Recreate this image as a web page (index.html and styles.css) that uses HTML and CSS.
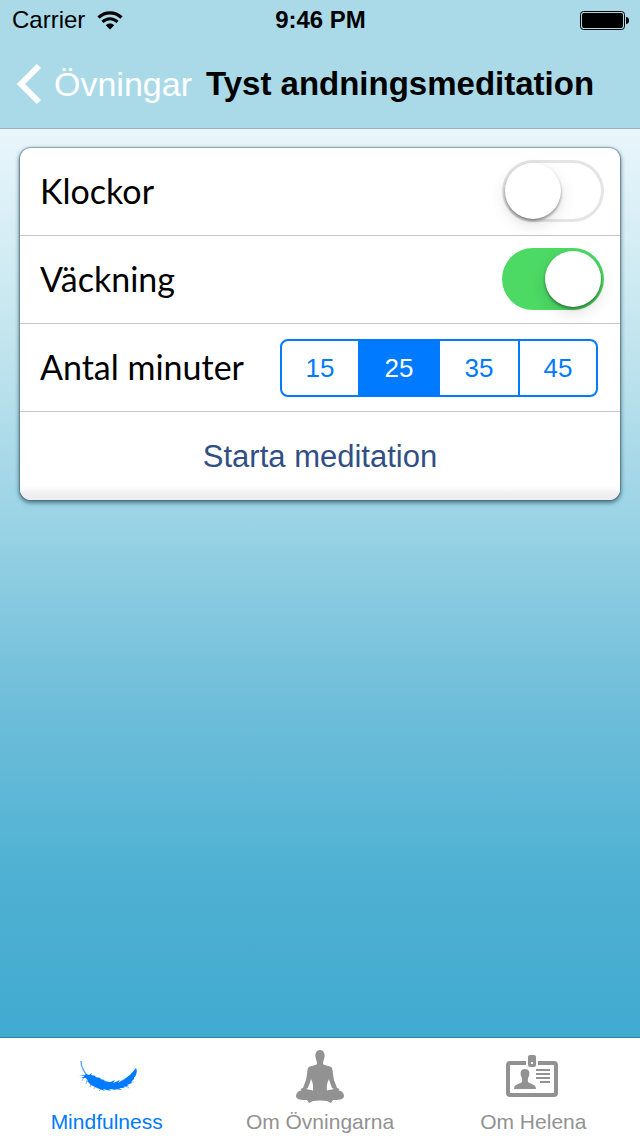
FILE: index.html
```html
<!DOCTYPE html>
<html lang="sv">
<head>
<meta charset="utf-8">
<meta name="viewport" content="width=device-width, initial-scale=1">
<title>Tyst andningsmeditation</title>
<link rel="stylesheet" href="styles.css">
</head>
<body>
<div class="app">
  <header class="top">
    <div class="status">
      <div class="status-left">
        <span>Carrier</span>
        <svg class="wifi" width="26" height="19" viewBox="0 0 26 19" aria-hidden="true">
          <path d="M1.500 6.500C8 .2 18 .2 24.500 6.500" fill="none" stroke="#000" stroke-width="3.200"/>
          <path d="M5.500 10.900C10 6.600 16 6.600 20.500 10.900" fill="none" stroke="#000" stroke-width="3"/>
          <path d="M8.800 14.200C11 11.800 15 11.800 17.200 14.200L13 18.500Z"/>
        </svg>
      </div>
      <span class="clock">9:46 PM</span>
      <svg class="battery" width="49" height="19" viewBox="0 0 49 19" aria-hidden="true">
        <rect x=".5" y=".5" width="44" height="18" rx="3" fill="none" stroke="#000"/>
        <rect x="2" y="2" width="41" height="15" rx="2"/>
        <path d="M46 6c2 0 3 1.500 3 3.500s-1 3.500-3 3.500z"/>
      </svg>
    </div>
    <nav class="navbar">
      <button class="back" type="button">
        <svg width="26" height="42" viewBox="0 0 26 42" aria-hidden="true">
          <path d="M23 3L5 21L23 39" fill="none" stroke="#fff" stroke-width="6"/>
        </svg>
        <span>Övningar</span>
      </button>
      <h1 class="title">Tyst andningsmeditation</h1>
    </nav>
  </header>

  <main class="content">
    <form class="card">
      <div class="row">
        <label class="label" for="bells">Klockor</label>
        <input class="switch" id="bells" type="checkbox">
      </div>
      <div class="row">
        <label class="label" for="alarm">Väckning</label>
        <input class="switch" id="alarm" type="checkbox" checked>
      </div>
      <div class="row">
        <span class="label" id="minutes">Antal minuter</span>
        <div class="segments" role="radiogroup" aria-labelledby="minutes">
          <label class="segment"><input type="radio" name="min" value="15">15</label>
          <label class="segment"><input type="radio" name="min" value="25" checked>25</label>
          <label class="segment"><input type="radio" name="min" value="35">35</label>
          <label class="segment"><input type="radio" name="min" value="45">45</label>
        </div>
      </div>
      <button class="start" type="button">Starta meditation</button>
    </form>
  </main>

  <nav class="tabs">
    <a class="tab active" href="#mindfulness">
      <svg width="60" height="60" viewBox="0 0 60 60" aria-hidden="true">
        <path d="M4 15Q4 22 11 31" fill="none" stroke="currentColor" stroke-width="1.300" opacity=".7"/>
        <path fill="currentColor" d="M9 28L12 29L15 27L14 29L19 30L18 31L24 32L23 33L28 34L27 35L33 36L31 37L38 34L36 37L43 34L41 37L47 33L45 35L50 31L49 32L54 28L53 29L59 22Q61 26 58 31L57 31L57 33L54 36L55 37L50 39L52 40L46 41L48 42L42 42L45 44L38 43L40 44L32 43L34 45L26 43L28 45L20 42L22 43L14 39L15 40L10 35L11 35L9 32L4 32L8 30L2 29L8 29Z"/>
        <path d="M7 31L5 35M10 34L9 38M14 38L13 41M18 41L17 43M24 43L22 45M54 36L57 36M49 40L52 42" stroke="currentColor" opacity=".5"/>
      </svg>
      <span>Mindfulness</span>
    </a>
    <a class="tab" href="#ovningarna">
      <svg width="60" height="60" viewBox="0 0 60 60" aria-hidden="true">
        <path fill="currentColor" fill-rule="evenodd" d="M30 4C34 4 35 8 34.500 11C34 14 33 15 33 18C34 20 40 19 42 22C43 25 43 30 44 34C45 37 46 39 47 42C50 43 50 44 48 44C52 45 54 47 54 50C54 54 48 54 43 54L41 57L37 55Q30 54 23 55L19 57L17 54C12 54 6 54 6 50C6 47 8 45 12 44C10 44 10 43 13 42C14 39 15 37 16 34C17 30 17 25 18 22C20 19 26 20 27 18C27 15 26 14 25.500 11C25 8 26 4 30 4ZM21 33C20 37 19 39 18 41L18 42L16 43L23 44.500C23.500 39 22.500 36 21 33ZM39 33C37.500 36 36.500 39 37 44.500L44 43L42 42C41 39 40 37 39 33Z"/>
      </svg>
      <span>Om Övningarna</span>
    </a>
    <a class="tab" href="#helena">
      <svg width="60" height="60" viewBox="0 0 60 60" aria-hidden="true">
        <path d="M23 17H7Q5 17 5 19V47Q5 49 7 49H51Q53 49 53 47V19Q53 17 51 17H35" fill="none" stroke="currentColor" stroke-width="4"/>
        <path fill="currentColor" fill-rule="evenodd" d="M27 9H31Q33 9 33 11V19Q33 21 31 21H27Q25 21 25 19V11Q25 9 27 9ZM28 16V18H30V16Z"/>
        <path fill="currentColor" d="M22 23C26 23 27 26 26 30C25 32 24.500 33 25 36C27 38 33 38 33 43H11C11 38 17 38 19 36C19.500 33 19 32 18 30C17 26 18 23 22 23Z"/>
        <path d="M33 24H47M33 28H47M33 32H47M37 36H47" stroke="currentColor" stroke-width="2"/>
      </svg>
      <span>Om Helena</span>
    </a>
  </nav>
</div>
</body>
</html>
```

FILE: styles.css
```css
* {
  box-sizing: border-box;
}

body {
  margin: 0;
  font-family: "Helvetica Neue", "Liberation Sans", Arial, sans-serif;
  color: #000;
}

button {
  border: 0;
  padding: 0;
  background: none;
  font: inherit;
}

.app {
  display: flex;
  flex-direction: column;
  min-height: 100vh;
}

/* Top bar */
.top {
  background: #aadae8;
  border-bottom: 1px solid #a3adb2;
}

.status {
  display: grid;
  grid-template-columns: 1fr auto 1fr;
  align-items: center;
  height: 40px;
  padding: 0 11px 0 12px;
  font-size: 24px;
}

.status-left {
  display: flex;
  align-items: center;
  gap: 12px;
}

.clock {
  font-weight: 700;
}

.battery {
  justify-self: end;
}

.navbar {
  display: flex;
  align-items: center;
  gap: 14px;
  height: 88px;
  padding: 0 16px;
}

.back {
  display: flex;
  align-items: center;
  gap: 12px;
  font-size: 34px;
  color: #fff;
}

.title {
  margin: 0;
  font-size: 33px;
  font-weight: 700;
  white-space: nowrap;
}

/* Settings */
.content {
  flex: 1;
  padding: 19px 20px;
  background: linear-gradient(#e9f6fc 0%, #c5e6ef 22%, #9fd5e6 41%, #71bfda 62%, #4fb1d3 82%, #41aad0 100%);
}

.card {
  overflow: hidden;
  border-radius: 11px;
  background: #fff;
  box-shadow: 0 0 1px 1px rgba(60, 90, 105, 0.45), 0 2px 4px 1px rgba(20, 60, 75, 0.6);
}

.row {
  display: flex;
  align-items: center;
  justify-content: space-between;
  height: 88px;
  padding: 0 16px 2px 20px;
  border-bottom: 1px solid #c8c7cc;
}

.label {
  font-family: "Gill Sans", Lato, sans-serif;
  font-size: 34px;
}

.switch {
  appearance: none;
  width: 102px;
  height: 62px;
  margin: 0;
  padding: 3px;
  border-radius: 31px;
  background: #fff;
  box-shadow: inset 0 0 0 3px #e5e5e5;
}

.switch::before {
  content: "";
  display: block;
  width: 56px;
  height: 56px;
  border-radius: 50%;
  background: #fff;
  box-shadow: 0 2px 3px rgba(0, 0, 0, 0.4), 0 6px 16px rgba(0, 0, 0, 0.12);
}

.switch:checked {
  background: #4cd964;
  box-shadow: none;
}

.switch:checked::before {
  margin-left: auto;
}

.segments {
  display: flex;
  height: 58px;
  margin: 3px 6px 0 0;
  overflow: hidden;
  border: 2px solid #007aff;
  border-radius: 8px;
}

.segment {
  display: flex;
  align-items: center;
  justify-content: center;
  width: 80px;
  font-size: 26px;
  color: #007aff;
  border-left: 2px solid #007aff;
}

.segment:first-child {
  width: 76px;
  border-left: 0;
}

.segment:last-child {
  width: 78px;
}

.segment input {
  appearance: none;
  width: 0;
  height: 0;
  margin: 0;
}

.segment:has(:checked) {
  background: #007aff;
  color: #fff;
}

.start {
  display: block;
  width: 100%;
  height: 88px;
  padding-top: 2px;
  background: linear-gradient(#fff 84%, #eee 94%);
  font-size: 31px;
  color: #324f85;
}

/* Tab bar */
.tabs {
  display: flex;
  height: 99px;
  border-top: 1px solid #2f86a8;
  background: #fff;
}

.tab {
  flex: 1;
  display: flex;
  flex-direction: column;
  align-items: center;
  padding-top: 8px;
  gap: 4px;
  font-size: 21px;
  line-height: 24px;
  color: #929292;
  text-decoration: none;
}

.tab.active {
  color: #007aff;
}
```
